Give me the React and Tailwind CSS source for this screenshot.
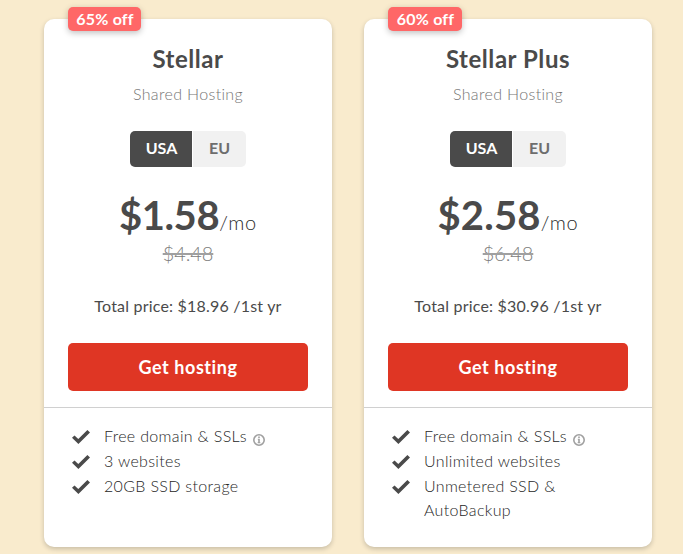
import React, { useState } from 'react';

const plans = [
  {
    name: 'Stellar',
    discount: '65% off',
    badgeClass: 'w-[73px]',
    price: '$1.58',
    priceClass: 'tracking-[-0.4px]',
    oldPrice: '$4.48',
    total: '$18.96',
    features: ['Free domain & SSLs', '3 websites', '20GB SSD storage'],
  },
  {
    name: 'Stellar Plus',
    discount: '60% off',
    badgeClass: 'w-[74px]',
    price: '$2.58',
    priceClass: 'tracking-[0.2px]',
    oldPrice: '$6.48',
    total: '$30.96',
    features: ['Free domain & SSLs', 'Unlimited websites', 'Unmetered SSD & AutoBackup'],
  },
];

function CheckIcon() {
  return (
    <svg width="18" height="14" viewBox="0 0 18 14" className="mt-[6px] shrink-0">
      <path d="M0 7.7 2.5 5.4l3.8 3.5L15.4 0 18 2.4 6.4 14z" fill="#4a4a4a" />
    </svg>
  );
}

function InfoIcon() {
  return (
    <svg width="12" height="12" viewBox="0 0 12 12" className="mt-[10px] ml-[6px] shrink-0">
      <circle cx="6" cy="6" r="5.2" fill="none" stroke="#a0a0a0" strokeWidth="1.6" />
      <path d="M5.2 2.6h1.6v1.3H5.2zM4.8 4.7h2v3.5h.6v1H4.6v-1h.6V5.7h-.4z" fill="#a0a0a0" />
    </svg>
  );
}

function PlanCard({ plan }) {
  const [region, setRegion] = useState('USA');

  return (
    <div className="relative flex h-[528px] w-72 flex-col rounded-[10px] bg-white shadow-[0_2px_5px_rgba(0,0,0,0.2)]">
      {/* Discount badge */}
      <span
        className={`absolute -top-3 left-6 h-6 rounded-[5px] bg-[#ff6767] pl-px text-center text-base leading-[23px] font-bold tracking-[0.2px] whitespace-nowrap text-white shadow-[0_2px_6px_rgba(0,0,0,0.25)] ${plan.badgeClass}`}
      >
        {plan.discount}
      </span>

      <div className="flex h-[388px] flex-col items-center px-6 pt-6">
        <h2 className="text-2xl leading-8 font-bold tracking-[0.55px]">{plan.name}</h2>
        <p className="mt-[7px] text-base leading-6 font-light tracking-[0.35px] text-[#757575]">Shared Hosting</p>

        {/* Region switch */}
        <div className="mt-[25px] flex h-9 gap-px overflow-hidden rounded-[5px] text-base font-bold">
          <button
            onClick={() => setRegion('USA')}
            className={`w-[62px] pb-[2px] pl-px ${region === 'USA' ? 'bg-[#4a4a4a] text-white' : 'bg-[#f1f1f1] text-[#6d6d6d]'}`}
          >
            USA
          </button>
          <button
            onClick={() => setRegion('EU')}
            className={`w-[53px] pb-[2px] ${region === 'EU' ? 'bg-[#4a4a4a] text-white' : 'bg-[#f1f1f1] text-[#6d6d6d]'}`}
          >
            EU
          </button>
        </div>

        <div className="mt-6 flex h-12 items-baseline whitespace-nowrap">
          <span className={`text-[40px] leading-[48px] font-bold ${plan.priceClass}`}>{plan.price}</span>
          <span className="text-xl leading-6 font-light tracking-[0.8px] text-[#2b2b2b]">/mo</span>
        </div>
        <p className="-mt-[2px] text-xl leading-8 font-light tracking-[-0.1px] text-[#7c7c7c] line-through decoration-[#a0a0a0] decoration-2">
          {plan.oldPrice}
        </p>
        <p className="mt-[25px] text-base leading-6 tracking-[0.2px]">Total price: {plan.total} /1st yr</p>
        <button className="mt-[25px] h-12 w-full shrink-0 rounded-[5px] bg-[#df3624] text-lg font-bold tracking-[0.55px] text-white">
          Get hosting
        </button>
      </div>

      <ul className="border-t border-[#d0d0d0] pt-4 pl-7">
        {plan.features.map((feature, i) => (
          <li key={feature} className="mb-px flex text-base leading-6 font-light tracking-[0.33px] text-[#262626]">
            <CheckIcon />
            <span className={`ml-[14px] ${i === 2 ? 'w-40' : ''}`}>{feature}</span>
            {i === 0 && <InfoIcon />}
          </li>
        ))}
      </ul>
    </div>
  );
}

export default function App() {
  return (
    <div className="flex h-[554px] w-[683px] gap-8 overflow-hidden bg-[#f9ebcd] pt-[19px] pl-11 font-[Lato,sans-serif] text-[#4a4a4a]">
      {plans.map((plan) => (
        <PlanCard key={plan.name} plan={plan} />
      ))}
    </div>
  );
}
